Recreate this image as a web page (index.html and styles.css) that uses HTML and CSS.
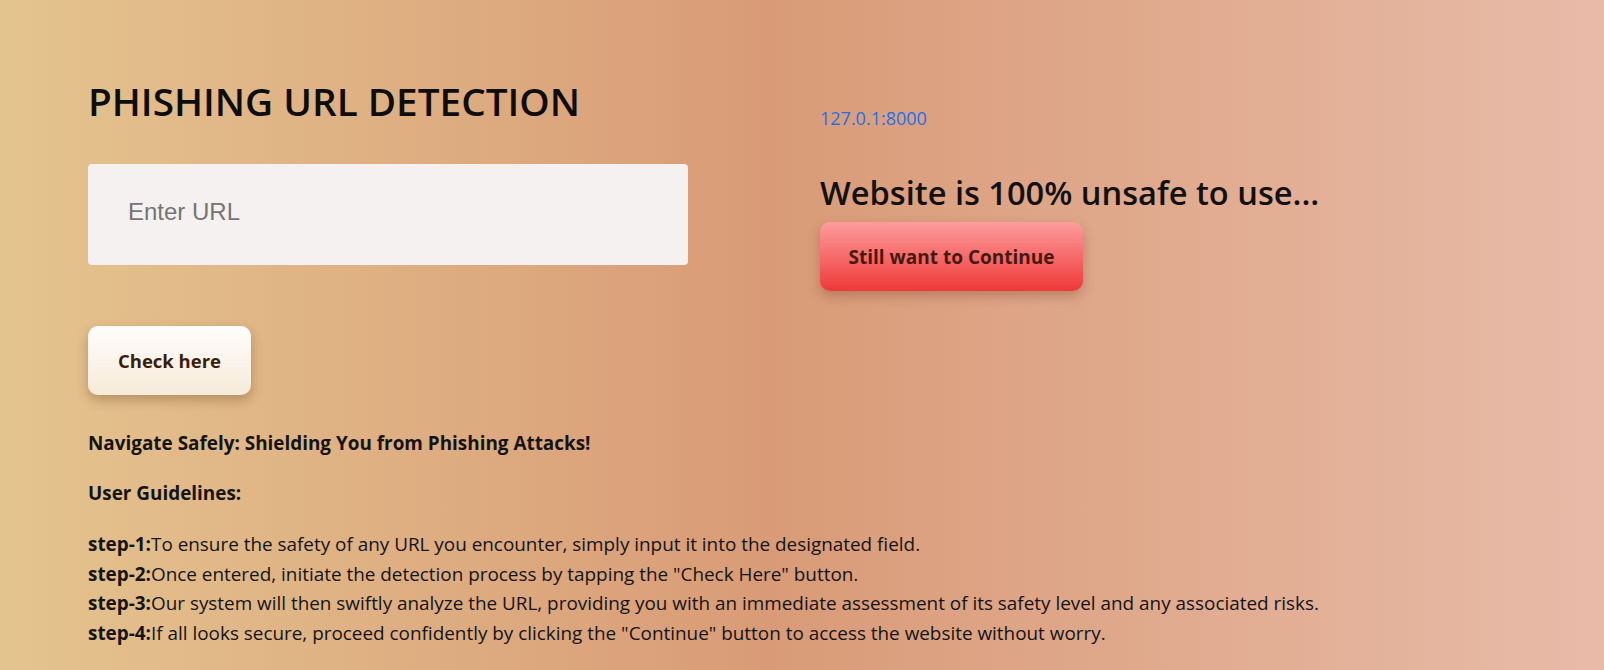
FILE: index.html
```html
<!DOCTYPE html>
<html lang="en">
<head>
<meta charset="utf-8">
<title>Phishing URL Detection</title>
<link rel="stylesheet" href="styles.css">
</head>
<body>
<main class="page">
  <section class="top">
    <div class="left">
      <h1 class="title">PHISHING URL DETECTION</h1>
      <form class="form">
        <input class="url-input" type="text" placeholder="Enter URL">
        <button class="btn-check" type="button">Check here</button>
      </form>
    </div>
    <div class="right">
      <a class="result-link" href="#">127.0.1:8000</a>
      <h2 class="verdict">Website is 100% unsafe to use...</h2>
      <button class="btn-continue" type="button">Still want to Continue</button>
    </div>
  </section>
  <section class="info">
    <p class="info-line strong">Navigate Safely: Shielding You from Phishing Attacks!</p>
    <p class="info-line strong">User Guidelines:</p>
    <p class="steps">
      <b>step-1:</b>To ensure the safety of any URL you encounter, simply input it into the designated field.<br>
      <b>step-2:</b>Once entered, initiate the detection process by tapping the "Check Here" button.<br>
      <b>step-3:</b>Our system will then swiftly analyze the URL, providing you with an immediate assessment of its safety level and any associated risks.<br>
      <b>step-4:</b>If all looks secure, proceed confidently by clicking the "Continue" button to access the website without worry.
    </p>
  </section>
</main>
</body>
</html>
```

FILE: styles.css
```css
* { box-sizing: border-box; }

html, body {
  margin: 0;
  height: 100%;
}

body {
  font-family: "Open Sans", "Noto Sans", sans-serif;
  color: #212529;
  background: linear-gradient(to right, #e4c48e 0%, #d99b77 48%, #e8bba8 100%);
  min-height: 670px;
}

.page {
  padding: 77px 0 0 88px;
}

.top {
  display: grid;
  grid-template-columns: 732px 1fr;
}

.title {
  margin: 0;
  font-size: 38.7px;
  line-height: 48px;
  font-weight: 600;
  color: #0d0d0d;
}

.form {
  display: flex;
  flex-direction: column;
  align-items: flex-start;
  margin-top: 39px;
}

.url-input {
  width: 600px;
  height: 101px;
  border: none;
  border-radius: 4px;
  background: #f5f1f0;
  padding: 0 40px 6px;
  font-family: "Liberation Sans", Arial, sans-serif;
  font-size: 24px;
  color: #333;
  outline: none;
}

.url-input::placeholder {
  color: #757575;
}

.btn-check {
  margin-top: 61px;
  width: 163px;
  height: 69px;
  border: none;
  border-radius: 10px;
  background: linear-gradient(to bottom, #fffefd, #f6ead8);
  box-shadow: 0 5px 12px rgba(90, 50, 20, 0.32);
  font-family: "Open Sans", "Noto Sans", sans-serif;
  font-size: 18.5px;
  font-weight: 700;
  color: #3a1c08;
  cursor: pointer;
}

.right {
  display: flex;
  flex-direction: column;
  align-items: flex-start;
  padding-top: 28px;
}

.result-link {
  font-size: 18px;
  line-height: 27px;
  color: #1a6ff2;
  text-decoration: none;
}

.verdict {
  margin: 41px 0 0;
  font-size: 32.6px;
  line-height: 39px;
  font-weight: 600;
  color: #111;
}

.btn-continue {
  margin-top: 10px;
  width: 263px;
  height: 69px;
  border: none;
  border-radius: 10px;
  background: linear-gradient(to bottom, #fd9d9d, #ef3838);
  box-shadow: 0 5px 12px rgba(110, 50, 30, 0.32);
  font-family: "Open Sans", "Noto Sans", sans-serif;
  font-size: 19px;
  font-weight: 700;
  color: #451a0e;
  cursor: pointer;
}

.info {
  margin-top: 35px;
  font-size: 18.9px;
  color: #141414;
}

.info-line {
  margin: 0 0 23px;
  line-height: 27px;
}

.strong { font-weight: 700; }

.steps {
  margin: 0;
  line-height: 29.7px;
}

.steps b { font-weight: 700; }
```
